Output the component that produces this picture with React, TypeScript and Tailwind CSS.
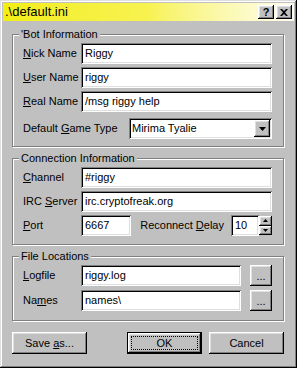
import type { ReactNode } from "react";

const raised =
  "bg-[#c0c0c0] shadow-[inset_-1px_-1px_#000,inset_1px_1px_#fff,inset_-2px_-2px_#808080,inset_2px_2px_#dfdfdf]";
const sunken =
  "bg-white shadow-[inset_1px_1px_#808080,inset_-1px_-1px_#fff,inset_2px_2px_#000,inset_-2px_-2px_#dfdfdf]";

const Group = ({ title, className, children }: { title: string; className: string; children: ReactNode }) => (
  <div className={`relative border border-[#808080] shadow-[inset_1px_1px_#fff,1px_1px_#fff] ${className}`}>
    <span className="absolute -top-[8px] left-[6px] bg-[#c0c0c0] px-[2px] leading-[14px]">{title}</span>
    {children}
  </div>
);

const Field = ({ value, className = "" }: { value: string; className?: string }) => (
  <div className={`${sunken} h-[21px] flex items-center pl-[4px] ${className}`}>{value}</div>
);

const Row = ({ label, u, rest, value }: { label: string; u: string; rest: string; value: string }) => (
  <div className="flex items-center">
    <span className="w-[58px]">
      {label}
      <u>{u}</u>
      {rest}
    </span>
    <Field value={value} className="flex-1" />
  </div>
);

const Browse = () => (
  <button className={`${raised} w-[22px] h-[21px] ml-[9px] flex items-end justify-center pb-[4px] leading-none`}>...</button>
);

const Arrow = ({ up = false, w = 7 }: { up?: boolean; w?: number }) => (
  <svg width={w} height={(w + 1) / 2} viewBox={`0 0 ${w} ${(w + 1) / 2}`}>
    <polygon points={up ? `0,${(w + 1) / 2} ${w / 2},0 ${w},${(w + 1) / 2}` : `0,0 ${w},0 ${w / 2},${(w + 1) / 2}`} fill="#000" />
  </svg>
);

export default function App() {
  return (
    <div
      className="w-[297px] h-[368px] bg-[#c0c0c0] p-[3px] text-[11px] text-black shadow-[inset_-1px_-1px_#000,inset_1px_1px_#dfdfdf,inset_-2px_-2px_#808080,inset_2px_2px_#fff]"
      style={{ fontFamily: '"Liberation Sans", Arial, sans-serif' }}
    >
      {/* title bar */}
      <div className="h-[18px] flex items-center pl-[2px] pr-[2px] bg-linear-to-r from-[#f2ee10] via-[#f8f250] to-[#fffdf0]">
        <span className="text-[13px] flex-1">{".\\default.ini"}</span>
        <button className={`${raised} w-[16px] h-[14px] flex items-center justify-center font-bold text-[11px] leading-none`}>?</button>
        <button className={`${raised} w-[16px] h-[14px] ml-[2px] flex items-center justify-center`}>
          <svg width="8" height="7" viewBox="0 0 8 7">
            <path d="M0 0h2l2 2 2-2h2L5 3.5 8 7H6L4 5 2 7H0l3-3.5z" fill="#000" />
          </svg>
        </button>
      </div>

      <div className="pl-[9px] pr-[10px] flex flex-col">
        <Group title="'Bot Information" className="mt-[13px] pt-[8px] pb-[7px] pl-[10px] pr-[11px] flex flex-col gap-[3px]">
          <Row label="" u="N" rest="ick Name" value="Riggy" />
          <Row label="" u="U" rest="ser Name" value="riggy" />
          <Row label="" u="R" rest="eal Name" value="/msg riggy help" />
          <div className="flex items-center mt-[3px]">
            <span className="flex-1">
              {"Default "}
              <u>G</u>
              {"ame Type"}
            </span>
            <div className={`${sunken} w-[143px] h-[21px] flex items-center pl-[3px] pr-[2px]`}>
              <span className="flex-1">Mirima Tyalie</span>
              <div className={`${raised} w-[16px] h-[17px] flex items-center justify-center`}>
                <Arrow />
              </div>
            </div>
          </div>
        </Group>

        <Group title="Connection Information" className="mt-[11px] pt-[8px] pb-[8px] pl-[10px] pr-[11px] flex flex-col gap-[3px]">
          <Row label="" u="C" rest="hannel" value="#riggy" />
          <Row label="IRC " u="S" rest="erver" value="irc.cryptofreak.org" />
          <div className="flex items-center">
            <span className="w-[58px]">
              <u>P</u>ort
            </span>
            <Field value="6667" className="w-[50px]" />
            <span className="ml-auto mr-[7px]">
              {"Reconnect "}
              <u>D</u>
              {"elay"}
            </span>
            <Field value="10" className="w-[28px]" />
            <div className="w-[13px] h-[19px] flex flex-col">
              <div className={`${raised} flex-1 flex items-center justify-center`}>
                <Arrow up w={5} />
              </div>
              <div className={`${raised} flex-1 flex items-center justify-center`}>
                <Arrow w={5} />
              </div>
            </div>
          </div>
        </Group>

        <Group title="File Locations" className="mt-[11px] pt-[8px] pb-[9px] pl-[10px] pr-[11px] flex flex-col gap-[4px]">
          <div className="flex items-center">
            <span className="w-[58px]">
              <u>L</u>ogfile
            </span>
            <Field value="riggy.log" className="flex-1" />
            <Browse />
          </div>
          <div className="flex items-center">
            <span className="w-[58px]">
              Na<u>m</u>es
            </span>
            <Field value="names\" className="flex-1" />
            <Browse />
          </div>
        </Group>

        <div className="mt-[11px] flex items-center">
          <button className={`${raised} w-[75px] h-[22px] flex items-center justify-center whitespace-pre`}>
            {"Save "}
            <u>a</u>
            {"s..."}
          </button>
          <button className="ml-auto w-[75px] h-[22px] border border-black p-0">
            <div className={`${raised} w-full h-full flex items-center justify-center p-[3px]`}>
              <div className="w-full h-full border border-dotted border-black flex items-center justify-center">OK</div>
            </div>
          </button>
          <button className={`${raised} ml-[7px] w-[75px] h-[22px] flex items-center justify-center`}>Cancel</button>
        </div>
      </div>
    </div>
  );
}
